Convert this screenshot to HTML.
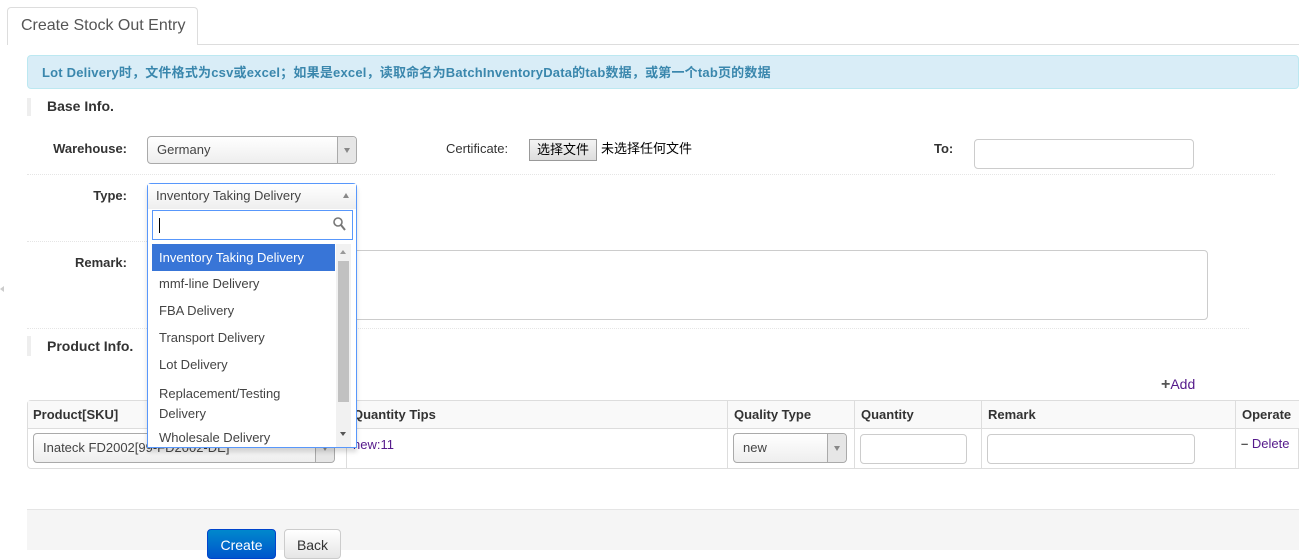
<!DOCTYPE html>
<html><head><meta charset="utf-8"><style>
*{box-sizing:border-box;margin:0;padding:0}
body{width:1299px;height:550px;overflow:hidden;background:#fff;font-family:"Liberation Sans","Noto Sans CJK SC",sans-serif;font-size:13px;color:#333;position:relative}
.a{position:absolute}
.lbl{position:absolute;font-weight:bold;text-align:right;width:120px}
.sel{position:absolute;border:1px solid #aaa;border-radius:4px;background:linear-gradient(#fff,#eee);color:#444;padding-left:9px}
.sel .arr{position:absolute;right:0;top:0;bottom:0;width:19px;border-left:1px solid #aaa;background:#e6e6e6;border-radius:0 4px 4px 0}
.sel .arr:after{content:"";position:absolute;left:6px;top:50%;margin-top:-2px;border:3.5px solid transparent;border-top:5px solid #888}
.inp{position:absolute;border:1px solid #ccc;border-radius:4px;background:#fff}
.dot{position:absolute;height:0;border-top:1px dotted #e5e5e5}
.th{position:absolute;top:400px;height:29px;line-height:29px;font-weight:bold;padding-left:6px;border-left:1px solid #ddd}
.td{position:absolute;top:429px;height:39px;border-left:1px solid #ddd}
.it{position:absolute;left:152px;width:183px;padding-left:7px;color:#444}
</style></head><body>
<div class="a" style="left:7px;top:7px;width:191px;height:38px;border:1px solid #ddd;border-bottom:none;border-radius:4px 4px 0 0;background:#fff;font-size:16px;color:#555;line-height:36px;padding-left:13px;z-index:2">Create Stock Out Entry</div>
<div class="a" style="left:7px;top:44px;width:1292px;border-top:1px solid #ddd"></div>
<div class="a" style="left:27px;top:55px;width:1272px;height:34px;background:#d9edf7;border:1px solid #bce8f1;border-radius:4px;color:#3a87ad;font-weight:bold;line-height:34px;padding-left:14px;letter-spacing:0.2px">Lot Delivery时，文件格式为csv或excel；如果是excel，读取命名为BatchInventoryData的tab数据，或第一个tab页的数据</div>
<div class="a" style="left:27px;top:98px;width:4px;height:18px;background:#eee"></div>
<div class="a" style="left:47px;top:98px;font-weight:bold;font-size:14px">Base Info.</div>
<div class="lbl" style="left:7px;top:141px">Warehouse:</div>
<div class="sel" style="left:147px;top:136px;width:210px;height:28px;line-height:26px">Germany<span class="arr"></span></div>
<div class="a" style="left:446px;top:141px;color:#333">Certificate:</div>
<div class="a" style="left:529px;top:139px;width:68px;height:22px;border:1px solid #999;background:linear-gradient(#f4f4f4,#ddd);font-size:13px;text-align:center;line-height:20px;color:#000">选择文件</div>
<div class="a" style="left:601px;top:138px;color:#000">未选择任何文件</div>
<div class="a" style="left:934px;top:141px;font-weight:bold">To:</div>
<div class="inp" style="left:974px;top:139px;width:220px;height:30px"></div>
<div class="dot" style="left:27px;top:174px;width:1248px"></div>
<div class="lbl" style="left:7px;top:188px">Type:</div>
<div class="dot" style="left:27px;top:241px;width:320px"></div>
<div class="lbl" style="left:7px;top:255px">Remark:</div>
<div class="inp" style="left:147px;top:250px;width:1061px;height:70px;border-color:#ccc"></div>
<div class="dot" style="left:27px;top:328px;width:1222px"></div>
<div class="a" style="left:27px;top:336px;width:4px;height:20px;background:#eee"></div>
<div class="a" style="left:47px;top:338px;font-weight:bold;font-size:14px">Product Info.</div>
<div class="a" style="left:1161px;top:376px;color:#551a8b;font-size:14px"><b style="color:#555;font-size:16px">+</b>Add</div>
<div class="a" style="left:27px;top:400px;width:1272px;height:69px;border:1px solid #ddd;border-radius:4px 0 0 4px"></div>
<div class="a" style="left:28px;top:401px;width:1271px;height:28px;background:#f9f9f9;border-bottom:1px solid #ddd"></div>
<div class="th" style="left:27px;border-left:none">Product[SKU]</div>
<div class="th" style="left:346px">Quantity Tips</div>
<div class="th" style="left:727px">Quality Type</div>
<div class="th" style="left:854px">Quantity</div>
<div class="th" style="left:981px">Remark</div>
<div class="th" style="left:1235px">Operate</div>
<div class="td" style="left:346px"></div><div class="td" style="left:727px"></div><div class="td" style="left:854px"></div><div class="td" style="left:981px"></div><div class="td" style="left:1235px"></div>
<div class="sel" style="left:33px;top:433px;width:302px;height:30px;line-height:28px">Inateck FD2002[99-FD2002-DE]<span class="arr"></span></div>
<div class="a" style="left:353px;top:437px;color:#551a8b">new:11</div>
<div class="sel" style="left:733px;top:433px;width:114px;height:30px;line-height:28px">new<span class="arr"></span></div>
<div class="inp" style="left:860px;top:434px;width:107px;height:30px"></div>
<div class="inp" style="left:987px;top:434px;width:208px;height:30px"></div>
<div class="a" style="left:1241px;top:436px;color:#551a8b"><b style="color:#555">–</b> Delete</div>
<div class="a" style="left:27px;top:509px;width:1272px;height:41px;background:#f5f5f5;border-top:1px solid #e5e5e5"></div>
<div class="a" style="left:207px;top:529px;width:69px;height:30px;background:linear-gradient(#0088cc,#0055cc);border:1px solid #04c;border-radius:4px;color:#fff;font-size:14px;text-align:center;line-height:30px">Create</div>
<div class="a" style="left:284px;top:529px;width:57px;height:30px;background:linear-gradient(#fff,#e6e6e6);border:1px solid #ccc;border-radius:4px;color:#333;font-size:14px;text-align:center;line-height:30px">Back</div>
<!-- dropdown -->
<div class="a" style="left:147px;top:183px;width:210px;height:265px;background:#fff;border:1px solid #5897fb;border-radius:4px 4px 0 0;box-shadow:0 4px 5px rgba(0,0,0,.15)"></div>
<div class="a" style="left:148px;top:184px;width:208px;height:25px;background:linear-gradient(#fff,#eee);color:#444;padding-left:8px;line-height:24px">Inventory Taking Delivery<span class="a" style="right:7px;top:9px;border:3.5px solid transparent;border-bottom:5px solid #888;border-top:none"></span></div>
<div class="a" style="left:152px;top:210px;width:201px;height:30px;border:1px solid #5897fb;background:#fff"><span class="a" style="left:6px;top:7px;width:1px;height:15px;background:#000"></span>
<svg class="a" style="right:6px;top:6px" width="13" height="14" viewBox="0 0 13 14"><circle cx="5" cy="5" r="4" fill="none" stroke="#777" stroke-width="1.6"/><path d="M8 8l4 5" stroke="#777" stroke-width="2"/></svg></div>
<div class="it" style="top:244px;height:27px;line-height:27px;background:#3875d7;color:#fff">Inventory Taking Delivery</div>
<div class="it" style="top:276px">mmf-line Delivery</div>
<div class="it" style="top:303px">FBA Delivery</div>
<div class="it" style="top:330px">Transport Delivery</div>
<div class="it" style="top:357px">Lot Delivery</div>
<div class="it" style="top:384px;line-height:20px">Replacement/Testing<br>Delivery</div>
<div class="it" style="top:430px;height:16px;overflow:hidden">Wholesale Delivery</div>
<div class="a" style="left:336px;top:244px;width:15px;height:203px;background:#f1f1f1"></div>
<div class="a" style="left:338px;top:261px;width:11px;height:141px;background:#c1c1c1"></div>
<div class="a" style="left:340px;top:250px;border:3.5px solid transparent;border-bottom:4px solid #999;border-top:none"></div>
<div class="a" style="left:340px;top:432px;border:3.5px solid transparent;border-top:4px solid #555;border-bottom:none"></div>
<div class="a" style="left:0;top:286px;border:3px solid transparent;border-right:4px solid #ccc;border-left:none"></div>
</body></html>
